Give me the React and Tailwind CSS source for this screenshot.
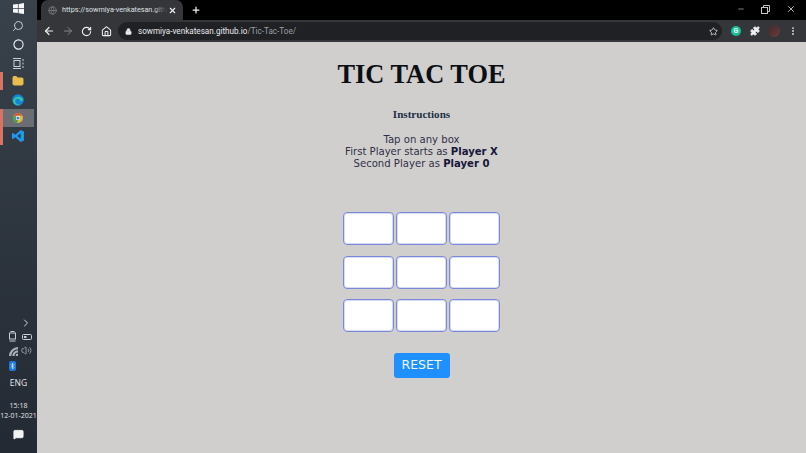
import { useState } from "react";
import {
  ArrowLeft,
  ArrowRight,
  RotateCw,
  Home,
  Lock,
  Star,
  Puzzle,
  MoreVertical,
  Plus,
  X,
  Minus,
  Search,
  Circle,
  Globe,
  ChevronRight,
  Bluetooth,
  Volume2,
  MessageSquare,
  Folder,
} from "lucide-react";

const WinLogo = () => (
  <svg width="11" height="11" viewBox="0 0 11 11" fill="#f4f6f8">
    <path d="M0 1.6 4.9 1v4.2H0zM5.6.9 11 0v5.2H5.6zM0 5.9h4.9V10L0 9.4zM5.6 5.9H11V11l-5.4-.8z" />
  </svg>
);

const TaskView = () => (
  <svg width="12" height="11" viewBox="0 0 12 11" fill="none" stroke="#c9ced3" strokeWidth="1">
    <rect x="2" y="2.5" width="6" height="6" />
    <path d="M1 .5h8M1 10.5h8M11 1v2M11 4.5v2M11 8v2" />
  </svg>
);

const EdgeLogo = () => (
  <svg width="12" height="12" viewBox="0 0 12 12">
    <circle cx="6" cy="6" r="5.8" fill="#1583d8" />
    <path d="M1 6.5C2 2.5 8 1.5 10.5 4.5c.8 1.2.5 2.7-1.5 2.7-1 0-1-.7-.8-1.2C6.5 3.6 3 4.8 3.2 7.6c.2 2 2.6 3.6 5 3.2C5 12.5 1 10 1 6.5Z" fill="#35c6a0" />
  </svg>
);

const ChromeLogo = () => (
  <svg width="10" height="10" viewBox="0 0 10 10">
    <circle cx="5" cy="5" r="5" fill="#e0b93a" />
    <path d="M5 0a5 5 0 0 1 4.4 2.6H5A2.5 2.5 0 0 0 2.7 4L1.2 1.8A5 5 0 0 1 5 0Z" fill="#d9503f" />
    <path d="M1.2 1.8 3 5a2.5 2.5 0 0 0 2.2 2.4L3.8 9.9A5 5 0 0 1 1.2 1.8Z" fill="#4a9e58" />
    <circle cx="5" cy="5" r="2.2" fill="#fff" />
    <circle cx="5" cy="5" r="1.6" fill="#4a7fd8" />
  </svg>
);

const VsCodeLogo = () => (
  <svg width="12" height="12" viewBox="0 0 12 12">
    <path d="M8.6 0 12 1.5v9L8.6 12 3.4 7.3 1.1 9 0 8.4V3.6L1.1 3l2.3 1.7Zm0 3.3L5.4 6l3.2 2.7Z" fill="#1e9be8" />
  </svg>
);

const SideIcon = ({ children, accent, active }) => (
  <div className={`relative flex h-[18.3px] w-[34px] items-center justify-center pl-[2px] ${active ? "bg-[#6a6e72]" : ""}`}>
    {accent && <span className="absolute left-0 top-0 h-full w-[2.5px] bg-[#d9735f]" />}
    {children}
  </div>
);

const Sidebar = () => (
  <aside className="flex h-full w-[37px] shrink-0 flex-col items-center justify-between bg-gradient-to-b from-[#39414a] to-[#232a33] pb-[13px]">
    <div className="-mt-px flex flex-col items-start self-start">
      <SideIcon><WinLogo /></SideIcon>
      <SideIcon><Search size={12} color="#c9ced3" className="-scale-x-100" /></SideIcon>
      <SideIcon><Circle size={11} color="#f0f2f4" strokeWidth={2.4} /></SideIcon>
      <SideIcon><TaskView /></SideIcon>
      <SideIcon accent><Folder size={12} fill="#e8bd4c" color="#e8bd4c" /></SideIcon>
      <SideIcon><EdgeLogo /></SideIcon>
      <SideIcon accent active><ChromeLogo /></SideIcon>
      <SideIcon accent><VsCodeLogo /></SideIcon>
    </div>
    <div className="flex w-full flex-col items-center">
      <div className="flex w-full justify-end pr-[5px]">
        <ChevronRight size={12} color="#d3d7da" />
      </div>
      <div className="mt-[2px] flex w-full justify-between pl-[8px] pr-[5px]">
        <svg width="9" height="11" viewBox="0 0 9 11" fill="none" stroke="#c9ced3">
          <rect x="1.5" y="2" width="6" height="6" />
          <path d="M2.5.5h4M1.5 10h6" />
        </svg>
        <svg width="10" height="6" viewBox="0 0 10 6" className="mt-[3px]" fill="none" stroke="#c9ced3">
          <rect x=".5" y=".5" width="9" height="5" rx="1" />
          <rect x="2" y="2" width="2.5" height="2" fill="#c9ced3" stroke="none" />
        </svg>
      </div>
      <div className="mt-[3px] flex w-full justify-between pl-[9px] pr-[5px]">
        <svg width="9" height="9" viewBox="0 0 9 9" fill="#aab0b6" className="mt-[2px]">
          <path d="M0 9a9 9 0 0 1 9-9v2.2A6.8 6.8 0 0 0 2.2 9Zm3.3 0A5.7 5.7 0 0 1 9 3.3v2.2A3.5 3.5 0 0 0 5.5 9Zm3.3 0A2.4 2.4 0 0 1 9 6.6V9Z" />
        </svg>
        <Volume2 size={11} color="#9aa0a6" />
      </div>
      <div className="mt-[5px] flex w-full justify-start pl-[9px]">
        <span className="flex h-[10px] w-[7px] items-center justify-center rounded-[2px] bg-[#1d78e0]">
          <Bluetooth size={8} color="#fff" />
        </span>
      </div>
      <span className="mt-[6px] font-['Open_Sans',sans-serif] text-[8.5px] leading-[11px] text-[#e3e6e8]">ENG</span>
      <span className="mt-[13px] font-['Open_Sans',sans-serif] text-[7px] leading-[9.5px] text-[#e3e6e8]">15:18</span>
      <span className="whitespace-nowrap font-['Open_Sans',sans-serif] text-[7px] leading-[9.5px] text-[#e3e6e8]">12-01-2021</span>
      <MessageSquare size={11} fill="#f0f2f4" color="#f0f2f4" className="mt-[9px]" />
    </div>
  </aside>
);

const TabBar = () => (
  <div className="flex h-[20px] shrink-0 items-end bg-black pl-[4px] font-['Roboto',sans-serif]">
    <div className="relative flex h-[20px] w-[142px] items-center rounded-t-[7px] bg-[#35363a] pl-[7px] pr-[6px]">
      <Globe size={9} color="#7d8084" className="shrink-0" />
      <span className="ml-[5px] whitespace-nowrap text-[7.2px] text-[#dfe1e4]">https://sowmiya-venkatesan.gith</span>
      <span className="absolute left-[113px] top-0 h-full w-[12px] bg-gradient-to-r from-transparent to-[#35363a]" />
      <X size={9} color="#f0f0f0" strokeWidth={3} className="ml-auto shrink-0" />
    </div>
    <Plus size={10} color="#f0f0f0" strokeWidth={3} className="mb-[5px] ml-[8px]" />
    <div className="mb-[6px] ml-auto flex items-center pr-[10px]">
      <Minus size={8} color="#b8b8b8" />
      <svg width="9" height="9" viewBox="0 0 9 9" fill="none" stroke="#c4c4c4" className="ml-[16px]">
        <rect x=".5" y="2.5" width="6" height="6" />
        <path d="M2.5 2.5v-2h6v6h-2" />
      </svg>
      <X size={10} color="#d8d8d8" className="ml-[16px]" />
    </div>
  </div>
);

const ToolBar = () => (
  <div className="flex h-[22px] shrink-0 items-center bg-[#35363a] pl-[6px] pr-[8px] font-['Roboto',sans-serif]">
    <ArrowLeft size={12} color="#eef0f2" strokeWidth={2.4} />
    <ArrowRight size={12} color="#85878a" strokeWidth={2} className="ml-[7px]" />
    <RotateCw size={11} color="#eef0f2" strokeWidth={2.4} className="ml-[7px]" />
    <Home size={11} color="#eef0f2" strokeWidth={2.2} className="ml-[9px]" />
    <div className="ml-[6px] flex h-[18px] flex-1 items-center rounded-full bg-[#202124] pl-[7px] pr-[4.5px]">
      <Lock size={7} fill="#e8eaed" color="#e8eaed" />
      <span className="ml-[6px] whitespace-nowrap text-[8.15px] text-[#e8eaed]">
        sowmiya-venkatesan.github.io<span className="text-[#9aa0a6]">/Tic-Tac-Toe/</span>
      </span>
      <Star size={9} color="#d8dadd" strokeWidth={2.2} className="ml-auto" />
    </div>
    <span className="ml-[9px] flex h-[10px] w-[10px] items-center justify-center rounded-full bg-[#15c39a] text-[7px] font-bold leading-none text-white">
      G
    </span>
    <Puzzle size={10} fill="#eef0f2" color="#eef0f2" className="ml-[9px]" />
    <span className="ml-[8px] h-[12px] w-[12px] rounded-full bg-gradient-to-br from-[#3f2a2c] to-[#6e3a3c]" />
    <MoreVertical size={10} color="#d8dadd" strokeWidth={2.6} className="ml-[8px]" />
  </div>
);

const Game = () => {
  const [board, setBoard] = useState(Array(9).fill(""));
  const [turn, setTurn] = useState("X");

  const handleTap = (i) => {
    if (board[i] !== "") return;
    const next = [...board];
    next[i] = turn;
    setBoard(next);
    setTurn(turn === "X" ? "0" : "X");
  };

  const handleReset = () => {
    setBoard(Array(9).fill(""));
    setTurn("X");
  };

  return (
    <main className="flex flex-1 flex-col items-center bg-[#d1cfcd] pt-[12px]">
      <h1 className="font-['Liberation_Serif',serif] text-[26.4px] font-bold leading-[40px] text-[#0b0f14]">
        TIC TAC TOE
      </h1>
      <h2 className="mt-[13px] font-['Liberation_Serif',serif] text-[11.1px] font-bold leading-[14px] text-[#1e2f45]">
        Instructions
      </h2>
      <div className="mt-[13px] text-center font-['DejaVu_Sans',sans-serif] text-[10.1px] leading-[12px] text-[#2f3048]">
        <p>Tap on any box</p>
        <p>
          First Player starts as <b className="text-[#16163a]">Player X</b>
        </p>
        <p>
          Second Player as <b className="text-[#16163a]">Player 0</b>
        </p>
      </div>
      <div className="mt-[42px] grid grid-cols-[repeat(3,51px)] gap-x-[2px] gap-y-[10.5px]">
        {board.map((cell, i) => (
          <button
            key={i}
            onClick={() => handleTap(i)}
            className="h-[33px] rounded-[4px] border border-[#7b88d8] bg-white text-lg font-bold ring-1 ring-inset ring-[#7b88d8]/30"
          >
            {cell}
          </button>
        ))}
      </div>
      <button
        onClick={handleReset}
        className="mt-[21px] h-[25px] w-[56px] rounded-[3px] bg-[#1e90ff] font-['DejaVu_Sans',sans-serif] text-[12.5px] text-[#f2f7ff]"
      >
        RESET
      </button>
    </main>
  );
};

export default function App() {
  return (
    <div className="flex h-[453px] w-[806px] overflow-hidden">
      <Sidebar />
      <div className="flex min-w-0 flex-1 flex-col">
        <TabBar />
        <ToolBar />
        <Game />
      </div>
    </div>
  );
}
